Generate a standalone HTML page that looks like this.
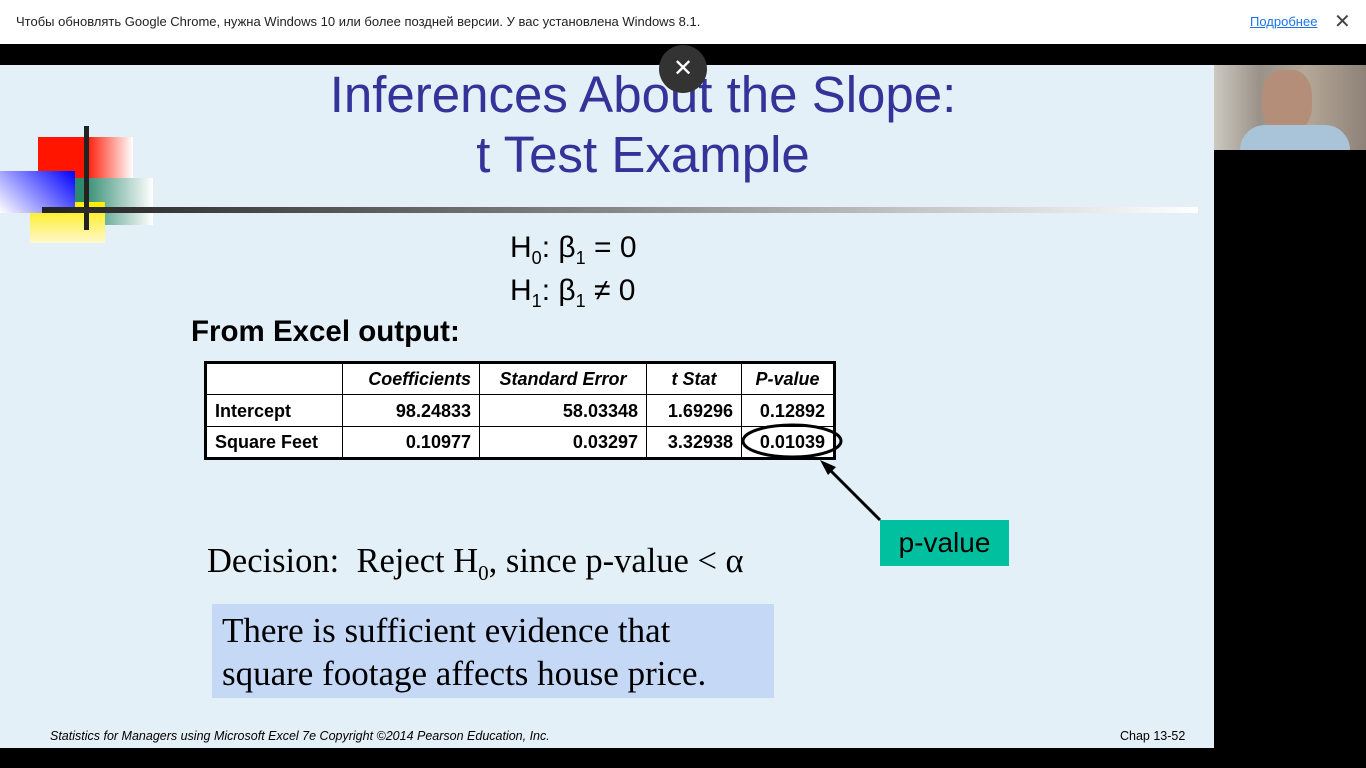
<!DOCTYPE html>
<html><head><meta charset="utf-8"><style>
*{margin:0;padding:0;box-sizing:border-box}
body{width:1366px;height:768px;overflow:hidden;background:#000;position:relative;font-family:"Liberation Sans",sans-serif}
.a{position:absolute}
#top{left:0;top:0;width:1366px;height:44px;background:#fff;font-size:13px;color:#222}
#slide{left:0;top:65px;width:1214px;height:683px;background:#e4f0f7;overflow:hidden}
.title{width:1214px;left:36px;text-align:center;color:#333399;font-size:51px;line-height:60px}
table{border-collapse:collapse;background:#fff;font-weight:bold;font-size:18px}
td{border:1px solid #000;height:32px;padding:0 8px;text-align:right;line-height:28px}
table{border:3px solid #000}
.ser{font-family:"Liberation Serif",serif}
</style></head><body>
<div id="top" class="a">
<div class="a" style="left:16px;top:14px">Чтобы обновлять Google Chrome, нужна Windows 10 или более поздней версии. У вас установлена Windows 8.1.</div>
<div class="a" style="left:1250px;top:14px;color:#1a73e8;text-decoration:underline">Подробнее</div>
<div class="a" style="left:1334px;top:9px;font-size:20px;color:#444">✕</div>
</div>
<div id="slide" class="a">
<div class="a title" style="top:0">Inferences About the Slope:</div>
<div class="a title" style="top:60px">t Test Example</div>
<div class="a" style="left:38px;top:72px;width:95px;height:45px;background:linear-gradient(90deg,#ff1500 50%,#fff)"></div>
<div class="a" style="left:75px;top:113px;width:78px;height:47px;background:linear-gradient(90deg,#2e8a6e 10%,#fff)"></div>
<div class="a" style="left:0;top:106px;width:75px;height:42px;background:linear-gradient(225deg,#0000ff,#fff)"></div>
<div class="a" style="left:30px;top:148px;width:75px;height:30px;background:linear-gradient(180deg,#ffee33,#fff8cc)"></div>
<div class="a" style="left:75px;top:137px;width:30px;height:11px;background:#ffee00"></div>
<div class="a" style="left:84px;top:61px;width:5px;height:104px;background:#222"></div>
<div class="a" style="left:42px;top:142px;width:1156px;height:6px;background:linear-gradient(90deg,#222,#888 50%,#fff)"></div>
<div class="a" style="left:510px;top:166px;font-size:30px">H<sub style="font-size:18px">0</sub>: β<sub style="font-size:18px">1</sub> = 0</div>
<div class="a" style="left:510px;top:209px;font-size:30px">H<sub style="font-size:18px">1</sub>: β<sub style="font-size:18px">1</sub> ≠ 0</div>
<div class="a" style="left:191px;top:250px;font-size:29.5px;font-weight:bold">From Excel output:</div>
<table class="a" style="left:204px;top:296px;width:632px">
<tr><td style="width:137px"></td><td style="width:137px"><i>Coefficients</i></td><td style="width:167px;text-align:center"><i>Standard Error</i></td><td style="width:95px;text-align:center"><i>t Stat</i></td><td style="text-align:center"><i>P-value</i></td></tr>
<tr><td style="text-align:left">Intercept</td><td>98.24833</td><td>58.03348</td><td>1.69296</td><td>0.12892</td></tr>
<tr><td style="text-align:left">Square Feet</td><td>0.10977</td><td>0.03297</td><td>3.32938</td><td>0.01039</td></tr>
</table>
<svg class="a" style="left:730px;top:355px" width="170" height="120"><ellipse cx="62" cy="21" rx="49" ry="16" fill="none" stroke="#000" stroke-width="3"/><line x1="150" y1="100" x2="95" y2="45" stroke="#000" stroke-width="3"/><polygon points="90,40 106,47 98,55" fill="#000"/></svg>
<div class="a" style="left:880px;top:455px;width:129px;height:46px;background:#00c0a0;font-size:28px;line-height:46px;text-align:center">p-value</div>
<div class="a ser" style="left:207px;top:477px;font-size:34.5px">Decision:&nbsp; Reject H<sub style="font-size:21px">0</sub>, since p-value &lt; α</div>
<div class="a ser" style="left:212px;top:539px;width:562px;height:94px;background:#c5d9f7;font-size:35px;line-height:43px;padding:5px 10px;white-space:nowrap">There is sufficient evidence that<br>square footage affects house price.</div>
<div class="a" style="left:50px;top:664px;font-size:12.5px;font-style:italic">Statistics for Managers using Microsoft Excel 7e Copyright ©2014 Pearson Education, Inc.</div>
<div class="a" style="left:1120px;top:664px;font-size:12.5px">Chap 13-52</div>
</div>
<div class="a" style="left:1214px;top:65px;width:152px;height:85px;background:linear-gradient(90deg,#ccc8c0,#9a9288 30%,#b5a898 60%,#8e8278);"></div>
<div class="a" style="left:1262px;top:70px;width:50px;height:62px;border-radius:40%;background:#b58e7a"></div>
<div class="a" style="left:1240px;top:125px;width:110px;height:25px;border-radius:30px 30px 0 0;background:#a9c3d8"></div>
<div class="a" style="left:659px;top:45px;width:48px;height:48px;border-radius:50%;background:#333;color:#fff;font-size:24px;text-align:center;line-height:48px">✕</div>
</body></html>
